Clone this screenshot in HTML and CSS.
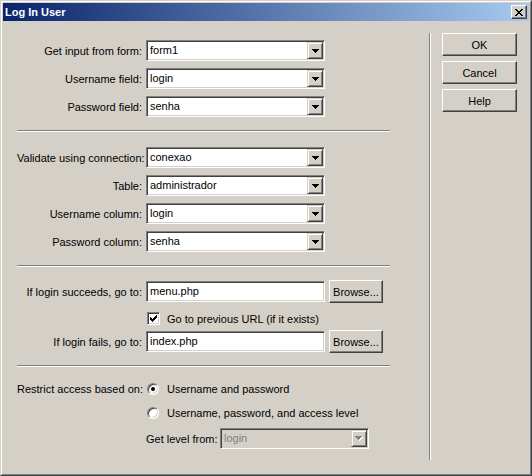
FILE: index.html
```html
<!DOCTYPE html>
<html>
<head>
<meta charset="utf-8">
<title>Log In User</title>
<link rel="stylesheet" href="styles.css">
</head>
<body>
<div class="window">
  <div class="frame">
    <div class="titlebar">
      <span class="title">Log In User</span>
      <span class="close">
        <svg width="8" height="7" viewBox="0 0 8 7" shape-rendering="crispEdges">
          <rect x="0" y="0" width="2" height="1"/><rect x="6" y="0" width="2" height="1"/>
          <rect x="1" y="1" width="2" height="1"/><rect x="5" y="1" width="2" height="1"/>
          <rect x="2" y="2" width="4" height="1"/>
          <rect x="3" y="3" width="2" height="1"/>
          <rect x="2" y="4" width="4" height="1"/>
          <rect x="1" y="5" width="2" height="1"/><rect x="5" y="5" width="2" height="1"/>
          <rect x="0" y="6" width="2" height="1"/><rect x="6" y="6" width="2" height="1"/>
        </svg>
      </span>
    </div>
    <div class="client">
      <div class="main">
        <div class="group">
          <div class="row"><span class="lbl">Get input from form:</span><div class="combo"><span class="val">form1</span><span class="drop"><svg class="arrow" width="7" height="4" viewBox="0 0 7 4" shape-rendering="crispEdges"><rect x="0" y="0" width="7" height="1"/><rect x="1" y="1" width="5" height="1"/><rect x="2" y="2" width="3" height="1"/><rect x="3" y="3" width="1" height="1"/></svg></span></div></div>
          <div class="row"><span class="lbl">Username field:</span><div class="combo"><span class="val">login</span><span class="drop"><svg class="arrow" width="7" height="4" viewBox="0 0 7 4" shape-rendering="crispEdges"><rect x="0" y="0" width="7" height="1"/><rect x="1" y="1" width="5" height="1"/><rect x="2" y="2" width="3" height="1"/><rect x="3" y="3" width="1" height="1"/></svg></span></div></div>
          <div class="row"><span class="lbl">Password field:</span><div class="combo"><span class="val">senha</span><span class="drop"><svg class="arrow" width="7" height="4" viewBox="0 0 7 4" shape-rendering="crispEdges"><rect x="0" y="0" width="7" height="1"/><rect x="1" y="1" width="5" height="1"/><rect x="2" y="2" width="3" height="1"/><rect x="3" y="3" width="1" height="1"/></svg></span></div></div>
        </div>
        <div class="sep sep1"></div>
        <div class="group">
          <div class="row"><span class="lbl">Validate using connection:</span><div class="combo"><span class="val">conexao</span><span class="drop"><svg class="arrow" width="7" height="4" viewBox="0 0 7 4" shape-rendering="crispEdges"><rect x="0" y="0" width="7" height="1"/><rect x="1" y="1" width="5" height="1"/><rect x="2" y="2" width="3" height="1"/><rect x="3" y="3" width="1" height="1"/></svg></span></div></div>
          <div class="row"><span class="lbl">Table:</span><div class="combo"><span class="val">administrador</span><span class="drop"><svg class="arrow" width="7" height="4" viewBox="0 0 7 4" shape-rendering="crispEdges"><rect x="0" y="0" width="7" height="1"/><rect x="1" y="1" width="5" height="1"/><rect x="2" y="2" width="3" height="1"/><rect x="3" y="3" width="1" height="1"/></svg></span></div></div>
          <div class="row"><span class="lbl">Username column:</span><div class="combo"><span class="val">login</span><span class="drop"><svg class="arrow" width="7" height="4" viewBox="0 0 7 4" shape-rendering="crispEdges"><rect x="0" y="0" width="7" height="1"/><rect x="1" y="1" width="5" height="1"/><rect x="2" y="2" width="3" height="1"/><rect x="3" y="3" width="1" height="1"/></svg></span></div></div>
          <div class="row"><span class="lbl">Password column:</span><div class="combo"><span class="val">senha</span><span class="drop"><svg class="arrow" width="7" height="4" viewBox="0 0 7 4" shape-rendering="crispEdges"><rect x="0" y="0" width="7" height="1"/><rect x="1" y="1" width="5" height="1"/><rect x="2" y="2" width="3" height="1"/><rect x="3" y="3" width="1" height="1"/></svg></span></div></div>
        </div>
        <div class="sep sep2"></div>
        <div class="group3">
          <div class="row brow"><span class="lbl">If login succeeds, go to:</span><div class="field">menu.php</div><button class="btn browse">Browse...</button></div>
          <div class="row crow"><span class="spacer"></span><span class="check"><svg width="7" height="7" viewBox="0 0 7 7" shape-rendering="crispEdges"><rect x="6" y="0" width="1" height="1"/><rect x="5" y="1" width="2" height="1"/><rect x="0" y="2" width="1" height="1"/><rect x="4" y="2" width="3" height="1"/><rect x="0" y="3" width="2" height="1"/><rect x="3" y="3" width="3" height="1"/><rect x="0" y="4" width="5" height="1"/><rect x="1" y="5" width="3" height="1"/><rect x="2" y="6" width="1" height="1"/></svg></span><span class="opt">Go to previous URL (if it exists)</span></div>
          <div class="row brow"><span class="lbl">If login fails, go to:</span><div class="field">index.php</div><button class="btn browse">Browse...</button></div>
        </div>
        <div class="sep sep3"></div>
        <div class="group4">
          <div class="row rrow"><span class="lbl">Restrict access based on:</span><span class="radio on"></span><span class="opt">Username and password</span></div>
          <div class="row rrow"><span class="spacer"></span><span class="radio"></span><span class="opt">Username, password, and access level</span></div>
          <div class="row"><span class="spacer"></span><span class="getlvl">Get level from:</span><div class="combo disabled"><span class="val">login</span><span class="drop"><svg class="arrow" width="8" height="5" viewBox="0 0 8 5" shape-rendering="crispEdges"><rect x="1" y="1" width="7" height="1" fill="#fff"/><rect x="2" y="2" width="5" height="1" fill="#fff"/><rect x="3" y="3" width="3" height="1" fill="#fff"/><rect x="4" y="4" width="1" height="1" fill="#fff"/><rect x="0" y="0" width="7" height="1"/><rect x="1" y="1" width="5" height="1"/><rect x="2" y="2" width="3" height="1"/><rect x="3" y="3" width="1" height="1"/></svg></span></div></div>
        </div>
      </div>
      <div class="vline"></div>
      <div class="buttons">
        <button class="btn side">OK</button>
        <button class="btn side">Cancel</button>
        <button class="btn side">Help</button>
      </div>
    </div>
  </div>
</div>
</body>
</html>
```
FILE: styles.css
```css
* { box-sizing: border-box; }
html, body { margin: 0; padding: 0; }
body {
  font-family: "Liberation Sans", Arial, sans-serif;
  font-size: 11px;
  color: #000;
  background: #d4d0c8;
}
.window {
  width: 532px;
  height: 476px;
  border: 1px solid;
  border-color: #d4d0c8 #404040 #404040 #d4d0c8;
  background: #d4d0c8;
}
.frame {
  height: 100%;
  border: 1px solid;
  border-color: #fff #808080 #808080 #fff;
  padding: 1px;
  display: flex;
  flex-direction: column;
}
.titlebar {
  height: 18px;
  flex: none;
  background: linear-gradient(to right, #0a246a, #a6caf0);
  display: flex;
  align-items: center;
  justify-content: space-between;
  padding: 0 2px;
}
.title {
  color: #fff;
  font-weight: bold;
  font-size: 11px;
}
.close {
  width: 16px;
  height: 14px;
  background: #d4d0c8;
  border: 1px solid;
  border-color: #fff #404040 #404040 #fff;
  box-shadow: inset -1px -1px #808080;
  display: flex;
  align-items: center;
  justify-content: center;
}
.close svg { fill: #000; display: block; }
.client {
  flex: 1;
  display: flex;
  align-items: flex-start;
  padding: 12px 0 0 14px;
}
.main {
  width: 373px;
  flex: none;
  padding-top: 7px;
}
.group, .group3, .group4 {
  display: flex;
  flex-direction: column;
}
.group { gap: 7px; }
.row {
  display: flex;
  align-items: center;
  height: 21px;
}
.lbl {
  width: 125px;
  flex: none;
  text-align: right;
  margin-right: 4px;
  white-space: nowrap;
}
.spacer {
  width: 129px;
  flex: none;
}
.combo {
  width: 179px;
  height: 21px;
  display: flex;
  border: 1px solid;
  border-color: #808080 #fff #fff #808080;
  box-shadow: inset 1px 1px #404040, inset -1px -1px #d4d0c8;
  padding: 1px;
  background: #fff;
}
.combo .val {
  flex: 1;
  padding-left: 2px;
  line-height: 17px;
  white-space: nowrap;
}
.drop {
  width: 16px;
  height: 17px;
  flex: none;
  background: #d4d0c8;
  border: 1px solid;
  border-color: #d4d0c8 #404040 #404040 #d4d0c8;
  box-shadow: inset 1px 1px #fff, inset -1px -1px #808080;
  display: flex;
  align-items: center;
  justify-content: center;
}
.arrow { display: block; fill: #000; }
.combo.disabled {
  width: 149px;
  background: #d4d0c8;
}
.combo.disabled .val { color: #808080; }
.combo.disabled .arrow { fill: #808080; }
.sep {
  height: 2px;
  border-top: 1px solid #808080;
  border-bottom: 1px solid #fff;
}
.sep1 { margin: 13px 0 15px; }
.sep2 { margin: 13px 0 13px; }
.sep3 { margin: 12px 0 14px; }
.group3 .brow { height: 23px; }
.group3 .crow { height: 13px; margin: 9px 0 5px; }
.field {
  width: 179px;
  height: 21px;
  border: 1px solid;
  border-color: #808080 #fff #fff #808080;
  box-shadow: inset 1px 1px #404040, inset -1px -1px #d4d0c8;
  background: #fff;
  padding-left: 3px;
  line-height: 19px;
  white-space: nowrap;
}
.btn {
  font-family: inherit;
  font-size: 11px;
  color: #000;
  background: #d4d0c8;
  border: 1px solid;
  border-color: #fff #404040 #404040 #fff;
  box-shadow: inset -1px -1px #808080;
  padding: 0;
  height: 23px;
  border-radius: 0;
}
.browse {
  width: 54px;
  margin-left: 4px;
}
.check {
  width: 13px;
  height: 13px;
  flex: none;
  margin-left: 1px;
  border: 1px solid;
  border-color: #808080 #fff #fff #808080;
  box-shadow: inset 1px 1px #404040, inset -1px -1px #d4d0c8;
  background: #fff;
  display: flex;
  align-items: center;
  justify-content: center;
}
.check svg { display: block; fill: #000; }
.opt {
  margin-left: 7px;
  white-space: nowrap;
}
.group4 .rrow { height: 16px; }
.group4 .rrow + .rrow { margin-top: 8px; }
.group4 .rrow + .row:not(.rrow) { margin-top: 7px; }
.radio {
  width: 12px;
  height: 12px;
  flex: none;
  margin-left: 1px;
  border-radius: 50%;
  border: 1px solid;
  border-color: #808080 #fff #fff #808080;
  box-shadow: inset 1px 1px #404040, inset -1px -1px #d4d0c8;
  background: #fff;
  position: relative;
}
.radio.on::after {
  content: "";
  position: absolute;
  left: 3px;
  top: 3px;
  width: 4px;
  height: 4px;
  border-radius: 50%;
  background: #000;
}
.radio + .opt { margin-left: 8px; }
.getlvl {
  white-space: nowrap;
  margin-right: 3px;
  width: 71px;
}
.vline {
  width: 2px;
  height: 427px;
  margin-left: 39px;
  flex: none;
  border-left: 1px solid #808080;
  border-right: 1px solid #fff;
}
.buttons {
  margin-left: 11px;
  display: flex;
  flex-direction: column;
  gap: 5px;
}
.side { width: 75px; }
```
